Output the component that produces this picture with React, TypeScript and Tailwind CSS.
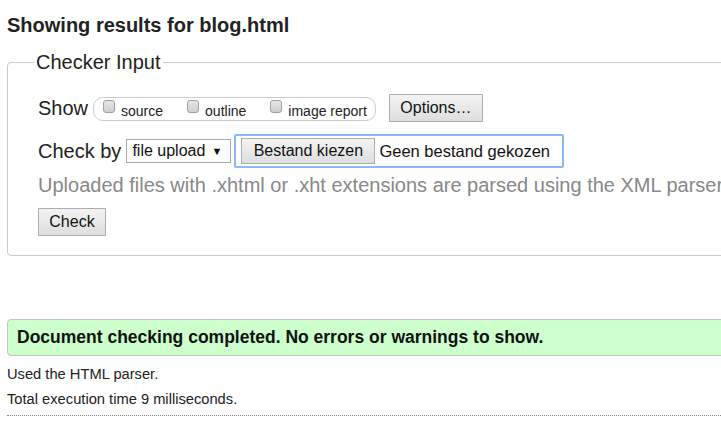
import { ReactNode } from "react";

function Box({ label }: { label: string }) {
  return (
    <label className="flex items-center mr-[24px] last:mr-0">
      <span className="w-[12px] h-[13px] rounded-[3px] border border-[#a0a0a0] bg-gradient-to-b from-[#e6e6e6] to-[#cfcfcf] mr-[6px] -mt-[6px]" />
      <span className="text-[14px] leading-none mt-[3px] text-[#222]">{label}</span>
    </label>
  );
}

function Btn({ children, className = "" }: { children: ReactNode; className?: string }) {
  return (
    <button
      className={
        "border border-[#adadad] bg-gradient-to-b from-[#f3f3f3] to-[#dedede] text-[16px] text-[#111] leading-none " +
        className
      }
    >
      {children}
    </button>
  );
}

export default function App() {
  return (
    <div className="w-[721px] h-[439px] overflow-hidden bg-white">
      <div
        className="w-[820px] px-[7px] text-[#222]"
        style={{ fontFamily: '"Liberation Sans", Arial, sans-serif' }}
      >
        <h2 className="text-[20px] font-bold leading-[23px] pt-[14px]">Showing results for blog.html</h2>

        <fieldset className="mt-[14px] border border-[#ccc] rounded-[4px] pb-[19px]">
          <legend className="ml-[26px] px-[2px] text-[20px] leading-[23px]">Checker Input</legend>

          <div className="pl-[30px]">
            <div className="flex items-center mt-[20px] h-[28px]">
              <span className="text-[20px] mr-[5px]">Show</span>
              <div className="flex items-center h-[24px] border border-[#ccc] rounded-[10px] pl-[9px] pr-[8px] mt-[2px]">
                <Box label="source" />
                <Box label="outline" />
                <Box label="image report" />
              </div>
              <Btn className="ml-[13px] w-[94px] h-[28px]">Options…</Btn>
            </div>

            <div className="flex items-center mt-[12px] h-[34px]">
              <span className="text-[20px] mr-[5px]">Check by</span>
              <div className="flex items-center h-[24px] w-[105px] border border-[#a9a9a9] pl-[5px] pr-[8px] text-[16px] text-[#111]">
                <span className="flex-1">file upload</span>
                <span className="text-[11px]">▼</span>
              </div>
              <div className="flex items-center h-[34px] w-[330px] ml-[3px] border-2 border-[#8ab8f0] rounded-[2px] pl-[5px]">
                <Btn className="w-[134px] h-[26px]">Bestand kiezen</Btn>
                <span className="ml-[4px] text-[16.5px] text-[#111]">Geen bestand gekozen</span>
              </div>
            </div>

            <p className="text-[20px] text-[#888] leading-[23px] mt-[6px] whitespace-nowrap">
              Uploaded files with .xhtml or .xht extensions are parsed using the XML parser.
            </p>

            <Btn className="mt-[11px] w-[68px] h-[28px]">Check</Btn>
          </div>
        </fieldset>

        <div className="mt-[63px] h-[37px] flex items-center bg-[#ccffcc] border border-[#c4c4c4] rounded-[4px] pl-[9px]">
          <span className="text-[17.5px] font-bold text-[#111]">
            Document checking completed. No errors or warnings to show.
          </span>
        </div>

        <p className="text-[14.7px] leading-[25px] mt-[6px]">Used the HTML parser.</p>
        <p className="text-[14.7px] leading-[25px]">Total execution time 9 milliseconds.</p>
        <div className="mt-[3px] border-t border-dotted border-[#888]" />
      </div>
    </div>
  );
}
